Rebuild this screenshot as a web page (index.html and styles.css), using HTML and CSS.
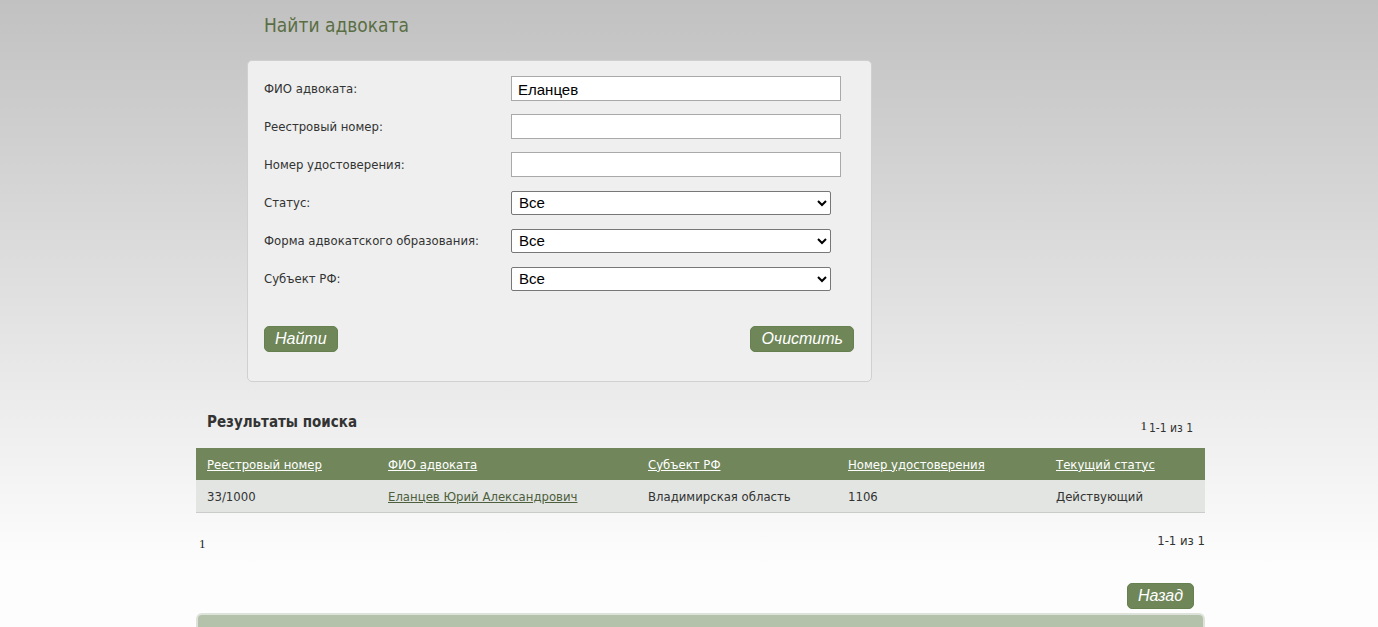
FILE: index.html
```html
<!DOCTYPE html>
<html lang="ru">
<head>
    <meta charset="UTF-8">
    <meta name="viewport" content="width=device-width, initial-scale=1.0">
    <title>Найти адвоката</title>
    <link rel="stylesheet" href="styles.css">
</head>
<body>
    <div class="page">
        <!-- Search form -->
        <div class="search">
            <h1 class="title">Найти адвоката</h1>
            <form class="search-form">
                <div class="row">
                    <label>ФИО адвоката:</label>
                    <input type="text" class="text" value="Еланцев">
                </div>
                <div class="row">
                    <label>Реестровый номер:</label>
                    <input type="text" class="text">
                </div>
                <div class="row">
                    <label>Номер удостоверения:</label>
                    <input type="text" class="text">
                </div>
                <div class="row">
                    <label>Статус:</label>
                    <select><option>Все</option></select>
                </div>
                <div class="row">
                    <label>Форма адвокатского образования:</label>
                    <select><option>Все</option></select>
                </div>
                <div class="row">
                    <label>Субъект РФ:</label>
                    <select><option>Все</option></select>
                </div>
                <div class="buttons">
                    <button type="button" class="btn">Найти</button>
                    <button type="button" class="btn">Очистить</button>
                </div>
            </form>
        </div>

        <!-- Results -->
        <div class="results-head">
            <h2>Результаты поиска</h2>
            <div class="pager"><span class="page-num">1</span><span>1-1 из 1</span></div>
        </div>
        <table class="results">
            <tr>
                <th class="col1"><a href="#">Реестровый номер</a></th>
                <th class="col2"><a href="#">ФИО адвоката</a></th>
                <th class="col3"><a href="#">Субъект РФ</a></th>
                <th class="col4"><a href="#">Номер удостоверения</a></th>
                <th><a href="#">Текущий статус</a></th>
            </tr>
            <tr>
                <td>33/1000</td>
                <td><a href="#">Еланцев Юрий Александрович</a></td>
                <td>Владимирская область</td>
                <td>1106</td>
                <td>Действующий</td>
            </tr>
        </table>
        <div class="results-foot">
            <span class="foot-num">1</span>
            <span>1-1 из 1</span>
        </div>
        <div class="back">
            <button type="button" class="btn">Назад</button>
        </div>
        <div class="footer"></div>
    </div>
</body>
</html>
```

FILE: styles.css
```css
html, body {
    margin: 0;
    padding: 0;
}

body {
    font-family: "DejaVu Sans Condensed", "DejaVu Sans", sans-serif;
    font-size: 13px;
    color: #333;
    background: linear-gradient(to bottom, #c1c1c1 0, #fcfdfc 565px, #fcfdfc 100%);
    height: 627px;
    overflow: hidden;
}

.page {
    width: 1009px;
    margin-left: 196px;
}

.search {
    margin-left: 51px;
    width: 625px;
}

.title {
    margin: 0;
    padding: 14px 0 0 17px;
    height: 60px;
    box-sizing: border-box;
    font-size: 19px;
    font-weight: normal;
    color: #5a6e44;
}

.search-form {
    background: #eeefee;
    border: 1px solid #cfd1cf;
    border-radius: 5px;
    padding: 15px 17px 29px 16px;
}

.row {
    display: flex;
    align-items: center;
    height: 25px;
    margin-bottom: 13px;
}

.row label {
    width: 247px;
    flex-shrink: 0;
}

.text {
    width: 330px;
    height: 25px;
    box-sizing: border-box;
    border: 1px solid #a9a9a9;
    padding: 1px 6px 0;
    font-family: "Liberation Sans", Arial, sans-serif;
    font-size: 15px;
    color: #000;
    background: #fff;
}

select {
    width: 320px;
    height: 24px;
    box-sizing: border-box;
    border: 1px solid #777;
    border-radius: 2px;
    padding: 0 3px;
    font-family: "Liberation Sans", Arial, sans-serif;
    font-size: 15px;
    color: #000;
    background: #fff;
}

.buttons {
    display: flex;
    justify-content: space-between;
    margin-top: 35px;
}

.btn {
    background: #6f8659;
    color: #fff;
    border: 1px solid #66804f;
    border-radius: 5px;
    height: 26px;
    padding: 0 10px;
    font-family: "Liberation Sans", Arial, sans-serif;
    font-style: italic;
    font-size: 16px;
    cursor: pointer;
}

.results-head {
    display: flex;
    justify-content: space-between;
    align-items: flex-start;
    padding: 31px 12px 13px 11px;
}

.results-head h2 {
    margin: 0;
    font-size: 15px;
    font-weight: bold;
    color: #333;
}

.pager {
    display: flex;
    align-items: flex-start;
    gap: 2px;
    margin-top: 8px;
    font-size: 12px;
}

.page-num {
    font-family: "Liberation Serif", serif;
    font-size: 13px;
    margin-top: -3px;
    color: #222;
}

.results {
    width: 100%;
    border-collapse: collapse;
}

.results th,
.results td {
    text-align: left;
    padding: 0 11px;
    height: 32px;
    font-weight: normal;
}

.results th {
    background: #71875b;
}

.results th a {
    color: #fff;
}

.results td {
    background: #e2e5e2;
    border-bottom: 1px solid #c9ccc9;
}

.results td a {
    color: #4e5f3e;
}

.col1 { width: 159px; }
.col2 { width: 238px; }
.col3 { width: 178px; }
.col4 { width: 186px; }

.results-foot {
    display: flex;
    justify-content: space-between;
    padding: 20px 0 0 3px;
    height: 50px;
}

.foot-num {
    padding-top: 3px;
    font-family: "Liberation Serif", serif;
    font-size: 13px;
    color: #222;
}

.back {
    display: flex;
    justify-content: flex-end;
    padding-right: 11px;
}

.footer {
    margin-top: 4px;
    height: 12px;
    background: #b5c2ab;
    border: 2px solid #dde2da;
    border-bottom: 0;
    border-radius: 6px 6px 0 0;
}
```
